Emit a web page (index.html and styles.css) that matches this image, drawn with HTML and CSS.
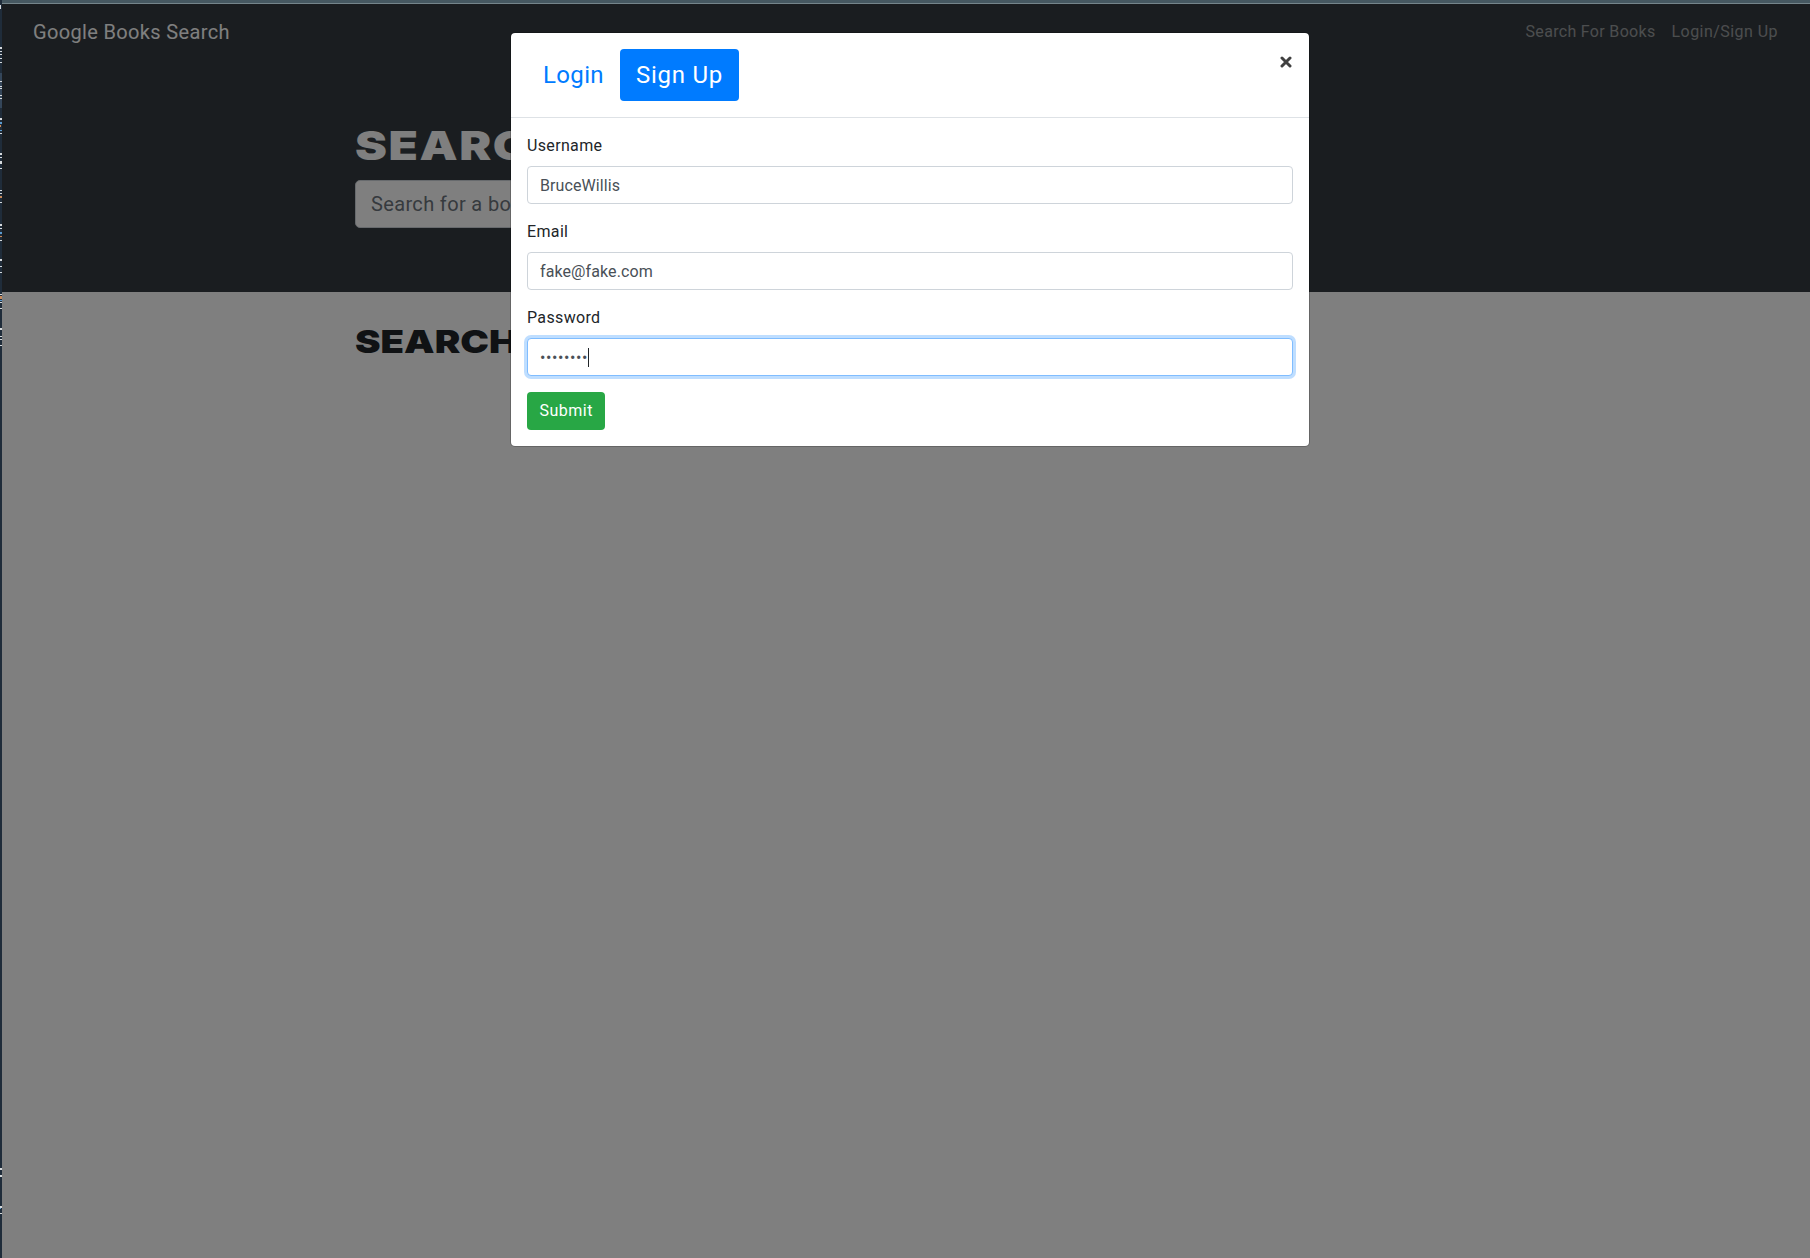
FILE: index.html
```html
<!DOCTYPE html>
<html lang="en">
<head>
<meta charset="utf-8">
<title>Google Books Search</title>
<link rel="stylesheet" href="styles.css">
</head>
<body>
<div class="screen">
  <svg class="edge" width="2" height="1258" viewBox="0 0 2 1258" aria-hidden="true">
    <path fill="#34465a" d="M0 73h2v35H0z"/>
    <path fill="#d5d9dc" d="M0 5h1v4H0zM0 47h2v2H0zM0 51h2v1H0zM0 54h2v1H0zM0 58h2v1H0zM0 62h2v1H0zM0 81h2v1H0zM0 86h2v1H0zM0 88h2v1H0zM0 95h2v1H0zM0 98h2v1H0zM0 118h2v2H0zM0 133h2v1H0zM0 153h2v2H0zM0 157h2v1H0zM0 161h2v3H0zM0 168h2v1H0zM0 190h2v1H0zM0 193h2v1H0zM0 202h2v1H0zM0 224h2v2H0zM0 228h2v1H0zM0 240h2v1H0zM0 259h2v2H0zM0 266h2v1H0zM0 272h2v1H0zM0 294h2v1H0zM0 302h2v1H0zM0 308h2v1H0zM0 328h2v2H0zM0 336h2v1H0zM0 339h2v1H0zM0 345h2v1H0zM0 1168h2v2H0zM0 1175h2v2H0zM0 1206h2v2H0zM0 1213h2v1H0z"/>
    <path fill="#5b9bd0" d="M0 122h2v2H0zM0 130h2v1H0zM0 232h2v2H0zM0 300h2v1H0zM0 1208h1v1H0z"/>
    <path fill="#c98a5a" d="M0 125h1v2H0zM0 196h2v2H0zM0 236h2v1H0zM0 296h2v3H0z"/>
  </svg>
  <div class="window">
    <div class="window-top"></div>
    <div class="page">
      <nav class="navbar">
        <a class="brand">Google Books Search</a>
        <div class="nav-links"><a class="link-books">Search For Books</a><a class="link-login">Login/Sign Up</a></div>
      </nav>
      <header class="hero">
        <div class="container">
          <h1>SEARCH</h1>
          <input class="search" type="text" placeholder="Search for a book">
        </div>
      </header>
      <main class="container">
        <h2>SEARCH</h2>
      </main>
      <div class="backdrop">
        <section class="modal" role="dialog">
          <div class="modal-header">
            <div class="pills"><a class="pill">Login</a><a class="pill active">Sign Up</a></div>
            <button class="close" aria-label="Close"><svg width="13" height="13" viewBox="0 0 13 13"><path d="M2 3l8 8M10 3l-8 8" stroke="#404040" stroke-width="3" stroke-linecap="round"/></svg></button>
          </div>
          <form class="modal-body">
            <label for="user">Username</label>
            <input class="field" id="user" type="text" value="BruceWillis">
            <label for="email">Email</label>
            <input class="field" id="email" type="text" value="fake@fake.com">
            <label>Password</label>
            <div class="field focused"><span class="dots">••••••••</span><span class="caret"></span></div>
            <button class="submit" type="button">Submit</button>
          </form>
        </section>
      </div>
    </div>
  </div>
</div>
</body>
</html>
```
FILE: styles.css
```css
* { box-sizing: border-box; }
body {
  margin: 0;
  overflow: hidden;
  font: 400 16px/24px Roboto, sans-serif;
  letter-spacing: .35px;
  color: #212529;
}
input, button { font: inherit; letter-spacing: inherit; }
.screen { display: grid; grid-template-columns: 2px 1816px; height: 1258px; overflow: hidden; }
.edge { display: block; background: #1f2c3a; }
.window { display: flex; flex-direction: column; }
.window-top { height: 4px; background: #465861; border-bottom: 1px solid #75858b; }
.page { position: relative; flex: 1; background: #fff; }

.navbar { display: flex; align-items: center; justify-content: space-between; height: 56px; padding: 0 40px 0 31px; background: #343a40; }
.brand { font-size: 20px; line-height: 30px; color: #fff; }
.nav-links { display: flex; gap: 16px; color: rgba(255, 255, 255, .5); }
.link-books { letter-spacing: .32px; }
.link-login { letter-spacing: .45px; }

.container { width: 1110px; margin: 0 auto; }
.hero { height: 232px; padding-top: 62px; background: #343a40; }
h1, h2 {
  width: fit-content;
  margin: 0;
  font-family: Inter, sans-serif;
  font-weight: 900;
  transform: scaleX(1.2);
  transform-origin: left;
}
h1 { font-size: 40px; line-height: 48px; letter-spacing: 1.3px; color: #fff; }
h2 { padding-top: 31px; font-size: 32px; line-height: 38px; letter-spacing: 0; }
.search {
  display: block;
  width: 730px;
  height: 48px;
  margin-top: 10px;
  padding: 0 15px;
  border: 1px solid #ced4da;
  border-radius: 5px;
  background: #fff;
  font-size: 20px;
}
.search::placeholder { color: #6c757d; opacity: 1; }

.backdrop { position: absolute; inset: 0; padding-top: 28px; background: rgba(0, 0, 0, .5); }
.modal { width: 800px; margin: 0 auto; border: 1px solid rgba(0, 0, 0, .2); border-radius: 5px; background: #fff; background-clip: padding-box; }
.modal-header { display: flex; justify-content: space-between; align-items: flex-start; padding: 16px; border-bottom: 1px solid #dee2e6; }
.pills { display: flex; font-size: 24px; line-height: 36px; }
.pill { padding: 8px 16px; border-radius: 4px; color: #007bff; }
.pill.active { background: #007bff; color: #fff; letter-spacing: .75px; }
.close { display: flex; padding: 6px 0 0; border: 0; background: none; }

.modal-body { display: flex; flex-direction: column; align-items: flex-start; padding: 16px; }
label { margin-bottom: 8px; }
.field {
  width: 100%;
  height: 38px;
  margin-bottom: 16px;
  padding: 6px 12px;
  border: 1px solid #ced4da;
  border-radius: 4px;
  background: #fff;
  color: #495057;
  letter-spacing: .1px;
}
.focused { display: flex; align-items: center; border-color: #80bdff; box-shadow: 0 0 0 3px rgba(0, 123, 255, .25); }
.dots { padding-top: 2px; letter-spacing: .6px; }
.caret { width: 1px; height: 19px; background: #212529; }
.submit { height: 38px; padding: 0 12.5px; border: 0; border-radius: 4px; background: #28a745; color: #fff; letter-spacing: .5px; }
```
